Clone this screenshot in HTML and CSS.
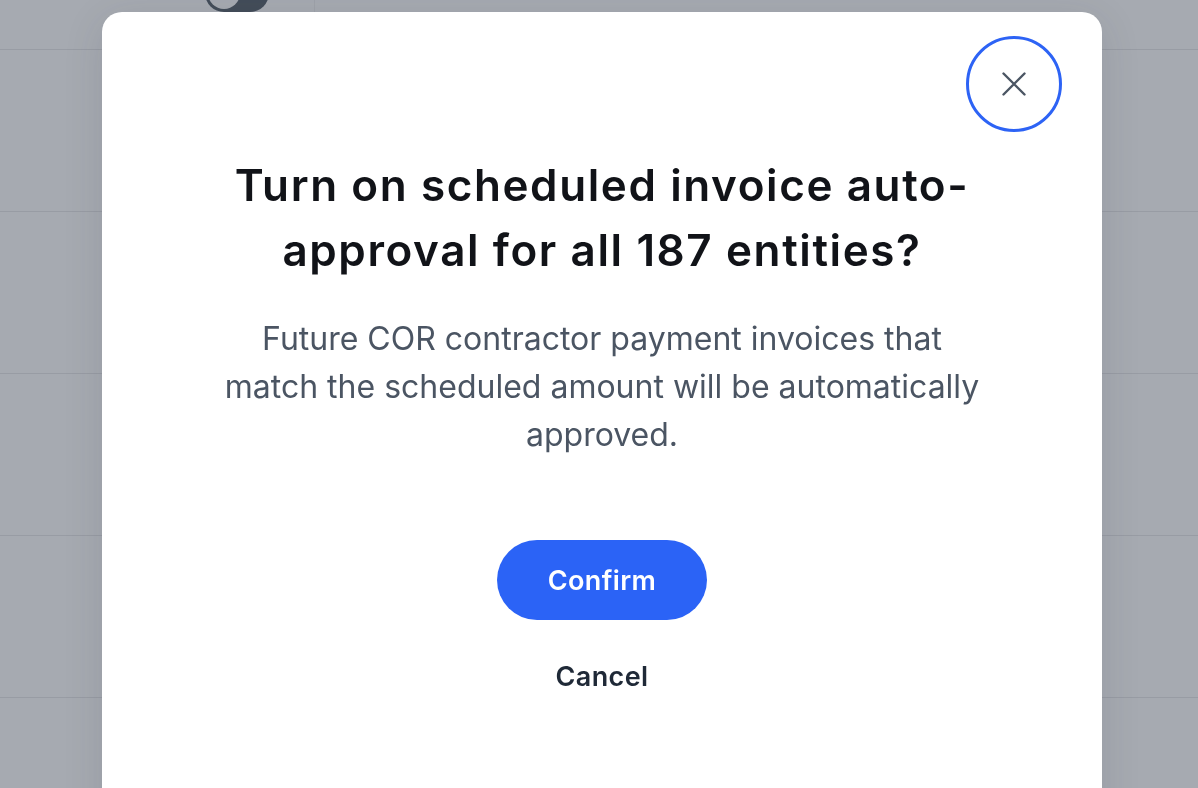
FILE: index.html
```html
<!DOCTYPE html>
<html lang="en">
<head>
<meta charset="utf-8">
<title>Auto-approval</title>
<link rel="stylesheet" href="styles.css">
</head>
<body>
<div class="page">
  <div class="row row-first">
    <div class="cell cell-toggle"><span class="toggle"><span class="knob"></span></span></div>
    <div class="cell cell-rest"></div>
  </div>
  <div class="row"></div>
  <div class="row"></div>
  <div class="row"></div>
  <div class="row"></div>
</div>

<div class="modal" role="dialog" aria-modal="true">
  <div class="modal-head">
    <button class="close-btn" aria-label="Close">
      <svg width="24" height="24" viewBox="0 0 24 24" fill="none" stroke="#4b5563" stroke-width="2.4" stroke-linecap="round"><path d="M1.5 1.5 L22.5 22.5 M22.5 1.5 L1.5 22.5"/></svg>
    </button>
  </div>
  <h2 class="title">Turn on scheduled invoice auto-approval for all 187 entities?</h2>
  <p class="desc">Future COR contractor payment invoices that match the scheduled amount will be automatically approved.</p>
  <div class="actions">
    <button class="btn-confirm">Confirm</button>
    <button class="btn-cancel">Cancel</button>
  </div>
</div>
</body>
</html>
```

FILE: styles.css
```css
html, body {
  margin: 0;
  padding: 0;
  height: 100%;
  overflow: hidden;
}
body {
  background: #a6aab1;
  font-family: Inter, "Liberation Sans", sans-serif;
}
.page {
  display: flex;
  flex-direction: column;
}
.row {
  height: 161px;
  border-bottom: 1px solid #989ca4;
  flex: none;
}
.row-first {
  height: 49px;
  display: flex;
}
.cell-toggle {
  width: 315px;
  border-right: 1px solid #9ea2a9;
  padding-left: 205px;
  box-sizing: border-box;
}
.toggle {
  display: block;
  width: 64px;
  height: 38px;
  margin-top: -26px;
  border-radius: 19px;
  background: #434d59;
  padding: 3px;
  box-sizing: border-box;
}
.knob {
  display: block;
  width: 32px;
  height: 32px;
  border-radius: 50%;
  background: #a6aab1;
}
.modal {
  position: fixed;
  left: 102px;
  top: 12px;
  width: 1000px;
  height: 820px;
  background: #ffffff;
  border-radius: 20px;
  box-shadow: 0 8px 40px rgba(40, 45, 55, 0.12);
  display: flex;
  flex-direction: column;
  align-items: center;
}
.modal-head {
  align-self: stretch;
  display: flex;
  justify-content: flex-end;
  padding: 24px 40px 0;
}
.close-btn {
  width: 96px;
  height: 96px;
  border-radius: 50%;
  border: 3px solid #2d63f5;
  background: #fff;
  display: flex;
  align-items: center;
  justify-content: center;
  padding: 0;
  cursor: pointer;
}
.title {
  margin: 21px 0 0;
  max-width: 800px;
  text-align: center;
  font-family: Inter, "Liberation Sans", sans-serif;
  font-weight: 600;
  font-size: 44px;
  line-height: 65px;
  letter-spacing: 1.6px;
  color: #111318;
}
.desc {
  margin: 32px 0 0;
  max-width: 780px;
  text-align: center;
  font-size: 32px;
  line-height: 48px;
  color: #4b5563;
}
.actions {
  margin-top: 81px;
  display: flex;
  flex-direction: column;
  align-items: center;
}
.btn-confirm {
  width: 210px;
  height: 80px;
  border: none;
  border-radius: 40px;
  background: #2b63f6;
  color: #fff;
  font-family: Inter, "Liberation Sans", sans-serif;
  font-weight: 600;
  font-size: 27px;
  letter-spacing: 0.4px;
  cursor: pointer;
}
.btn-cancel {
  margin-top: 41px;
  border: none;
  background: none;
  padding: 0;
  color: #1f2937;
  font-family: Inter, "Liberation Sans", sans-serif;
  font-weight: 600;
  font-size: 27px;
  letter-spacing: 0.4px;
  line-height: 32px;
  cursor: pointer;
}
```
